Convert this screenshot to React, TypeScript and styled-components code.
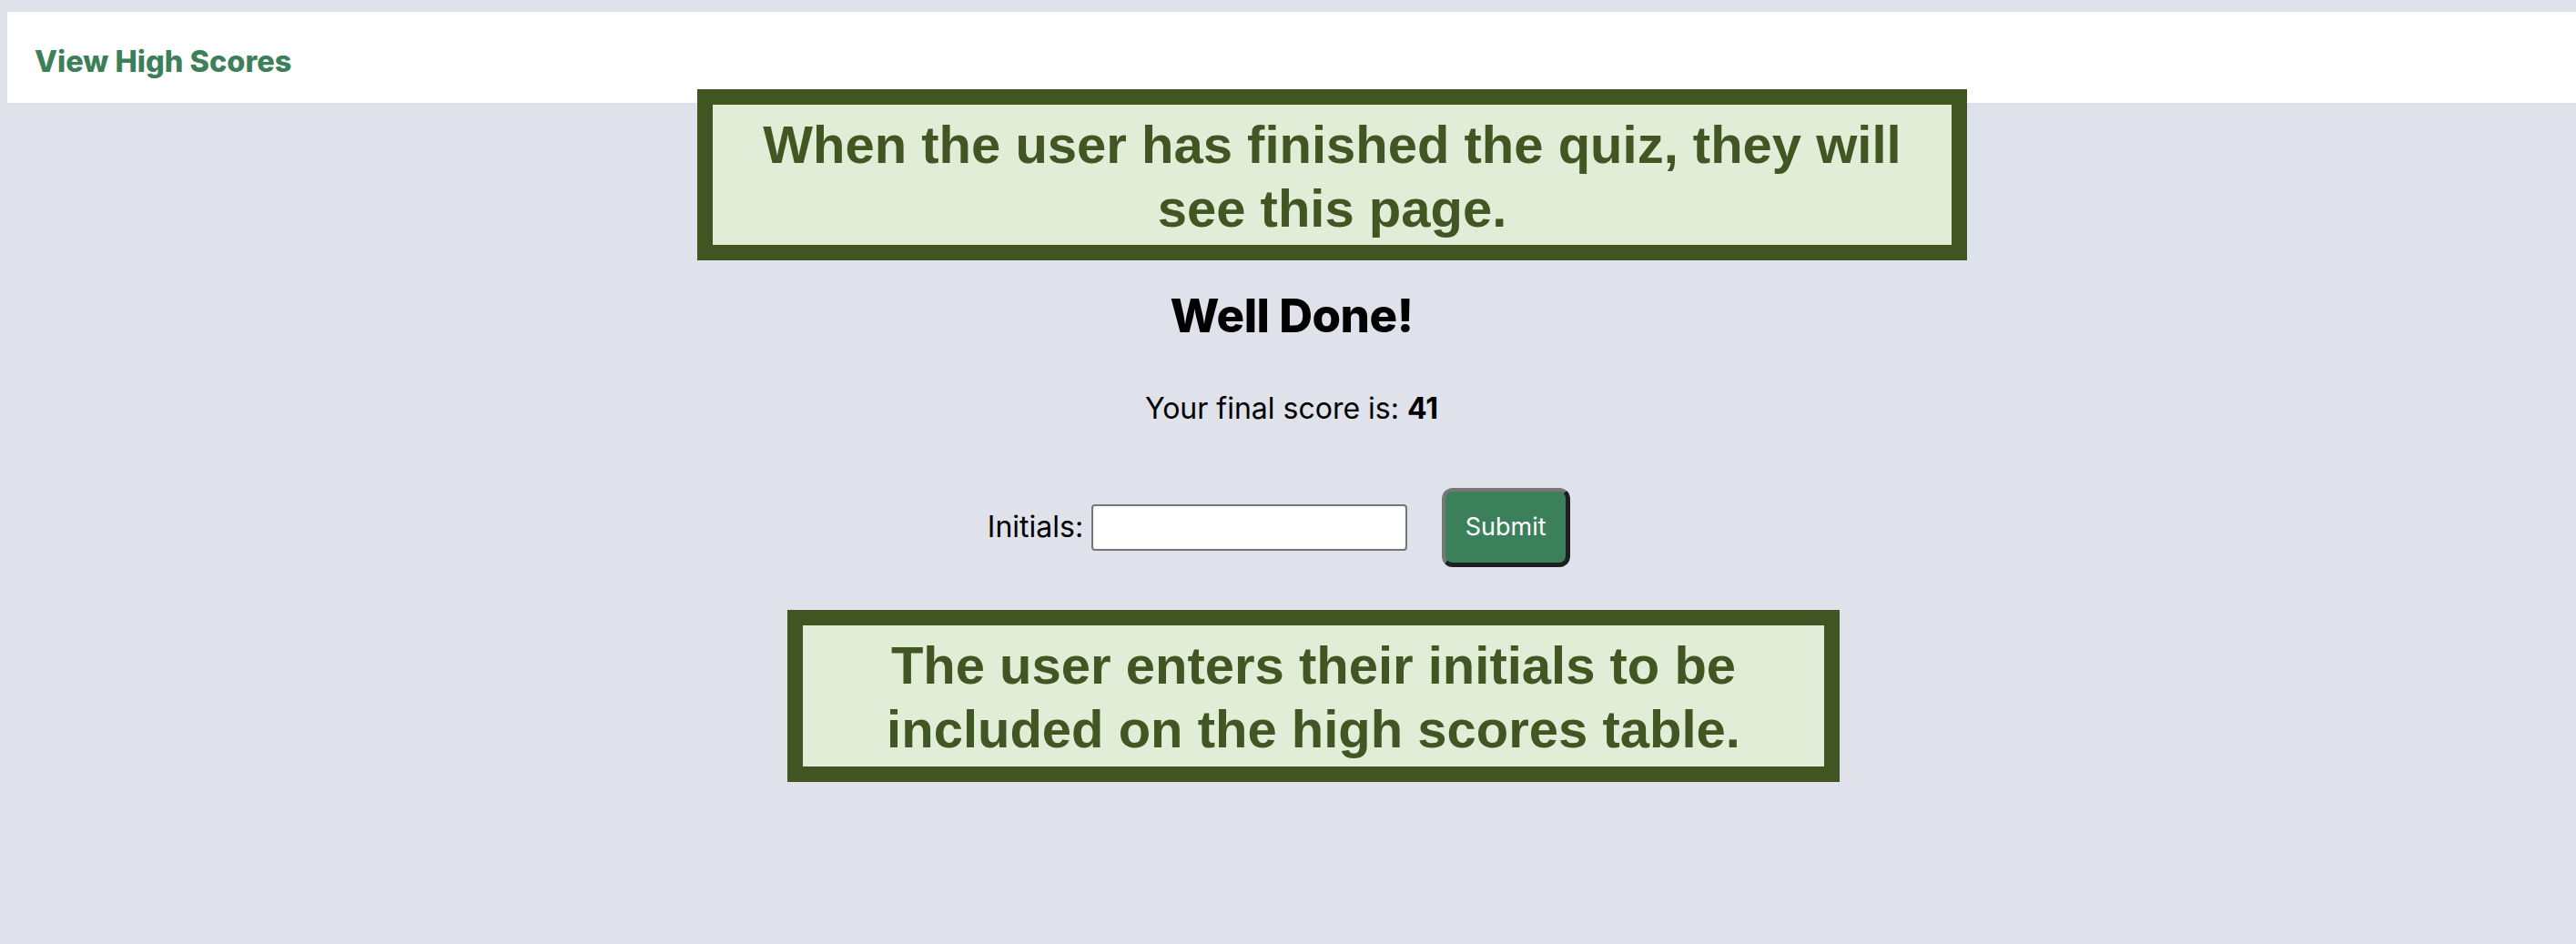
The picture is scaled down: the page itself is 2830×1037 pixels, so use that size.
import React from "react";
import styled, { createGlobalStyle } from "styled-components";

const GlobalStyle = createGlobalStyle`
  * { box-sizing: border-box; }
  html, body { margin: 0; padding: 0; }
  body {
    background: #dfe2eb;
    font-family: Inter, "Noto Sans", sans-serif;
    color: #000;
  }
`;

const Page = styled.div`
  position: relative;
  min-height: 1037px;
  padding: 13px 0 0 8px;
  background: #dfe2eb;
`;

const Header = styled.header`
  height: 100px;
  background: #ffffff;
  display: flex;
  align-items: center;
  padding-left: 30px;
`;

const HighScoresLink = styled.a`
  font-family: Inter, sans-serif;
  font-weight: 800;
  font-size: 32.5px;
  line-height: 1.2;
  color: #3b8059;
  text-decoration: none;
  margin-top: 8px;
  cursor: pointer;
`;

const Main = styled.main`
  display: flex;
  flex-direction: column;
  align-items: center;
  padding-top: 203px;
`;

const Title = styled.h2`
  margin: 0;
  font-family: Inter, sans-serif;
  font-weight: 800;
  font-size: 51px;
  line-height: 1.2;
  letter-spacing: -0.5px;
`;

const Score = styled.p`
  margin: 53px 0 0;
  font-family: Inter, sans-serif;
  font-weight: 400;
  font-size: 32px;
  line-height: 1.2;
  strong { font-weight: 700; }
`;

const Form = styled.form`
  margin-top: 67px;
  display: flex;
  align-items: center;
  padding-right: 28px;
`;

const Label = styled.label`
  font-family: Inter, sans-serif;
  font-size: 32px;
  line-height: 1.2;
  margin-right: 9px;
`;

const Input = styled.input`
  width: 347px;
  height: 51px;
  border: 2px solid #767676;
  border-radius: 4px;
  background: #fff;
  font-size: 26px;
  padding: 0 6px;
`;

const SubmitButton = styled.button`
  margin-left: 38px;
  width: 141px;
  height: 87px;
  background: #3b805a;
  color: #ffffff;
  font-family: Inter, sans-serif;
  font-size: 27px;
  font-weight: 400;
  border-style: solid;
  border-width: 4px 5px 5px 4px;
  border-color: #767676 #1f1f1f #1f1f1f #767676;
  border-radius: 12px;
  cursor: pointer;
`;

const Note = styled.div<{ $left: number; $top: number; $width: number; $height: number }>`
  position: absolute;
  left: ${(p) => p.$left}px;
  top: ${(p) => p.$top}px;
  width: ${(p) => p.$width}px;
  height: ${(p) => p.$height}px;
  border: 17px solid #405522;
  background: #e1edd6;
  color: #415622;
  font-family: "Liberation Sans", Arial, sans-serif;
  font-weight: 700;
  font-size: 58px;
  line-height: 70px;
  text-align: center;
  padding: 9px 20px 0;
`;

export default function App() {
  return (
    <>
      <GlobalStyle />
      <Page>
        <Header>
          <HighScoresLink>View High Scores</HighScoresLink>
        </Header>
        <Main>
          <Title>Well Done!</Title>
          <Score>
            Your final score is: <strong>41</strong>
          </Score>
          <Form onSubmit={(e) => e.preventDefault()}>
            <Label htmlFor="initials">Initials:</Label>
            <Input id="initials" type="text" />
            <SubmitButton type="submit">Submit</SubmitButton>
          </Form>
        </Main>
        <Note $left={766} $top={98} $width={1395} $height={188}>
          When the user has finished the quiz, they will see this page.
        </Note>
        <Note $left={865} $top={670} $width={1156} $height={189}>
          The user enters their initials to be included on the high scores table.
        </Note>
      </Page>
    </>
  );
}
